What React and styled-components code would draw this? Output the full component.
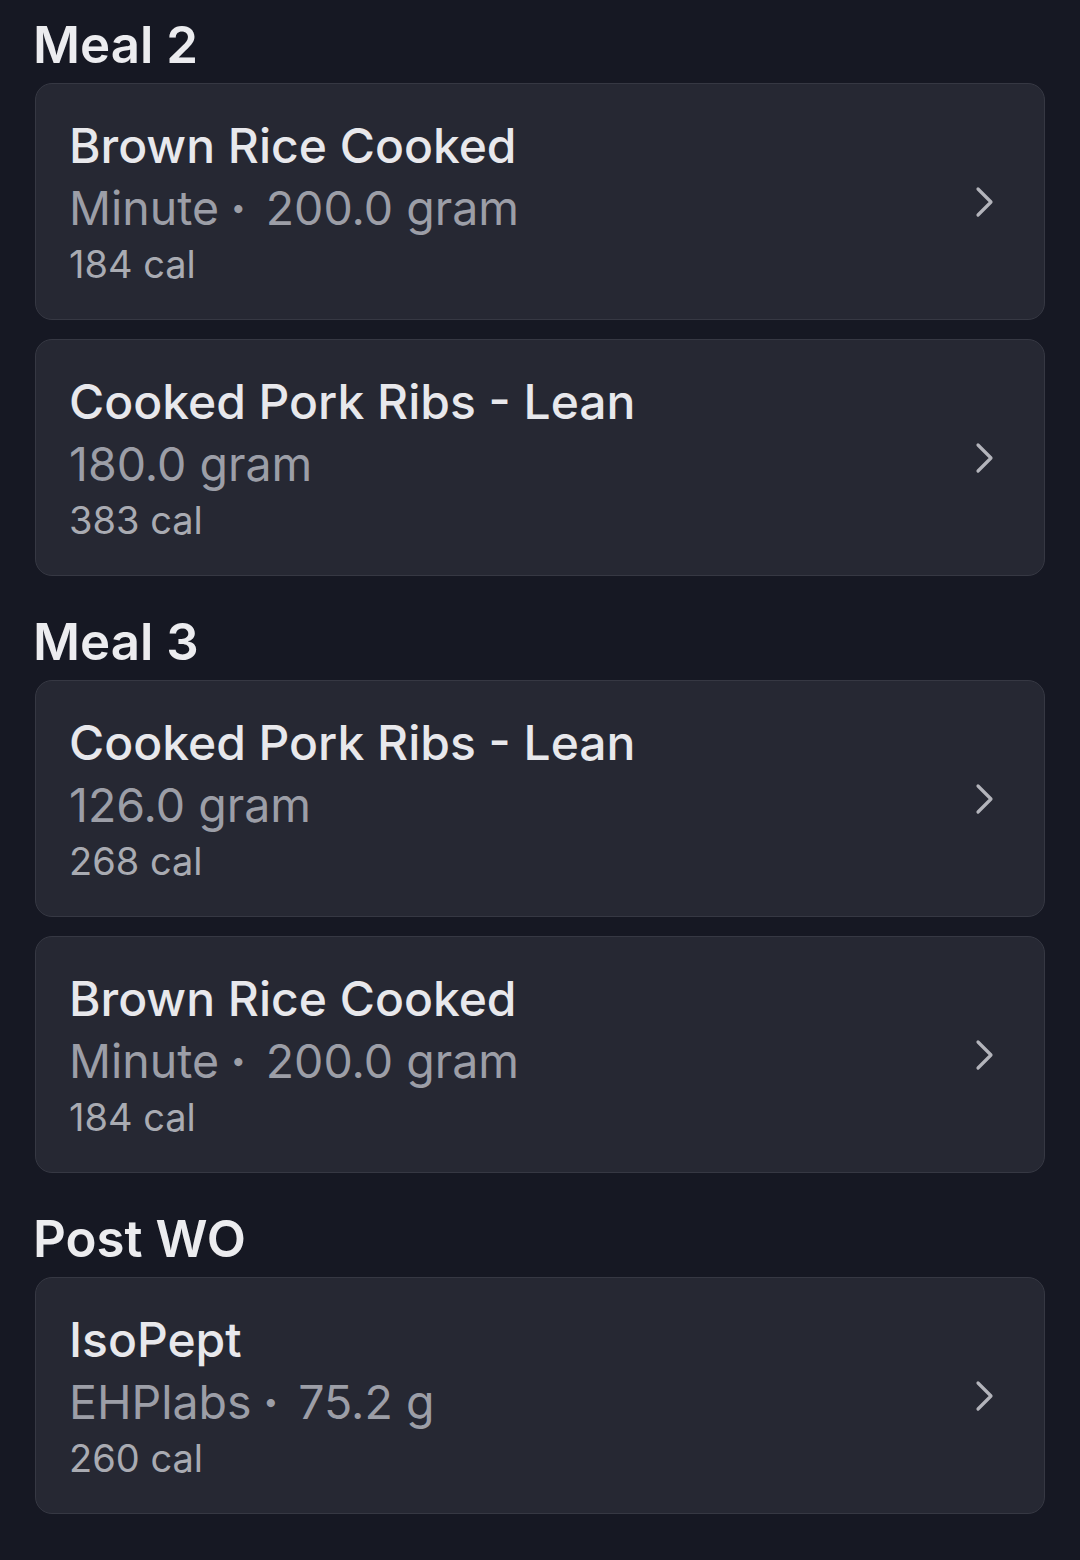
import React from "react"
import styled, { createGlobalStyle } from "styled-components"

const GlobalStyle = createGlobalStyle`
  html, body {
    margin: 0;
    padding: 0;
    background: #161823;
  }
  body {
    font-family: Inter, "Noto Sans", sans-serif;
    -webkit-font-smoothing: antialiased;
  }
`

const Page = styled.div`
  display: flex;
  flex-direction: column;
  gap: 36px;
  padding: 15px 35px 40px;
  width: 1080px;
  box-sizing: border-box;
  min-height: 1560px;
  background: #161823;
`

const Section = styled.section`
  display: flex;
  flex-direction: column;
`

const Heading = styled.h2`
  margin: 0 0 8px -2px;
  font-size: 51px;
  line-height: 60px;
  font-weight: 600;
  color: #ececef;
`

const List = styled.div`
  display: flex;
  flex-direction: column;
  gap: 19px;
`

const Card = styled.div`
  display: flex;
  align-items: center;
  justify-content: space-between;
  padding: 31px 48px 30px 33px;
  background: #262833;
  border: 1.5px solid #363843;
  border-radius: 17px;
`

const Info = styled.div`
  display: flex;
  flex-direction: column;
`

const Title = styled.div`
  font-size: 48px;
  line-height: 62px;
  height: 62px;
  font-weight: 500;
  color: #e8e8ec;
`

const Sub = styled.div`
  font-size: 46.5px;
  line-height: 62px;
  height: 62px;
  font-weight: 400;
  color: #9c9ea7;
  white-space: nowrap;
`

const Dot = styled.span`
  display: inline-block;
  margin: 0 20px 0 12px;
  font-size: 26px;
  line-height: 0;
  position: relative;
  top: -8px;
`

const Cal = styled.div`
  font-size: 38px;
  line-height: 50px;
  color: #a9abb2;
`

const Chevron = () => (
  <svg width="22" height="34" viewBox="0 0 22 34" fill="none">
    <path d="M4 4 L17 17 L4 30" stroke="#b3b4bb" strokeWidth="3.2" strokeLinecap="round" strokeLinejoin="round" />
  </svg>
)

const meals = [
  {
    name: "Meal 2",
    items: [
      { title: "Brown Rice Cooked", brand: "Minute", amount: "200.0 gram", cal: 184 },
      { title: "Cooked Pork Ribs - Lean", amount: "180.0 gram", cal: 383 },
    ],
  },
  {
    name: "Meal 3",
    items: [
      { title: "Cooked Pork Ribs - Lean", amount: "126.0 gram", cal: 268 },
      { title: "Brown Rice Cooked", brand: "Minute", amount: "200.0 gram", cal: 184 },
    ],
  },
  {
    name: "Post WO",
    items: [{ title: "IsoPept", brand: "EHPlabs", amount: "75.2 g", cal: 260 }],
  },
]

function FoodCard({ item }) {
  return (
    <Card>
      <Info>
        <Title>{item.title}</Title>
        <Sub>
          {item.brand && (
            <>
              {item.brand}
              <Dot>•</Dot>
            </>
          )}
          {item.amount}
        </Sub>
        <Cal>{item.cal} cal</Cal>
      </Info>
      <Chevron />
    </Card>
  )
}

export default function App() {
  return (
    <>
      <GlobalStyle />
      <Page>
        {meals.map((meal) => (
          <Section key={meal.name}>
            <Heading>{meal.name}</Heading>
            <List>
              {meal.items.map((item, i) => (
                <FoodCard key={i} item={item} />
              ))}
            </List>
          </Section>
        ))}
      </Page>
    </>
  )
}
